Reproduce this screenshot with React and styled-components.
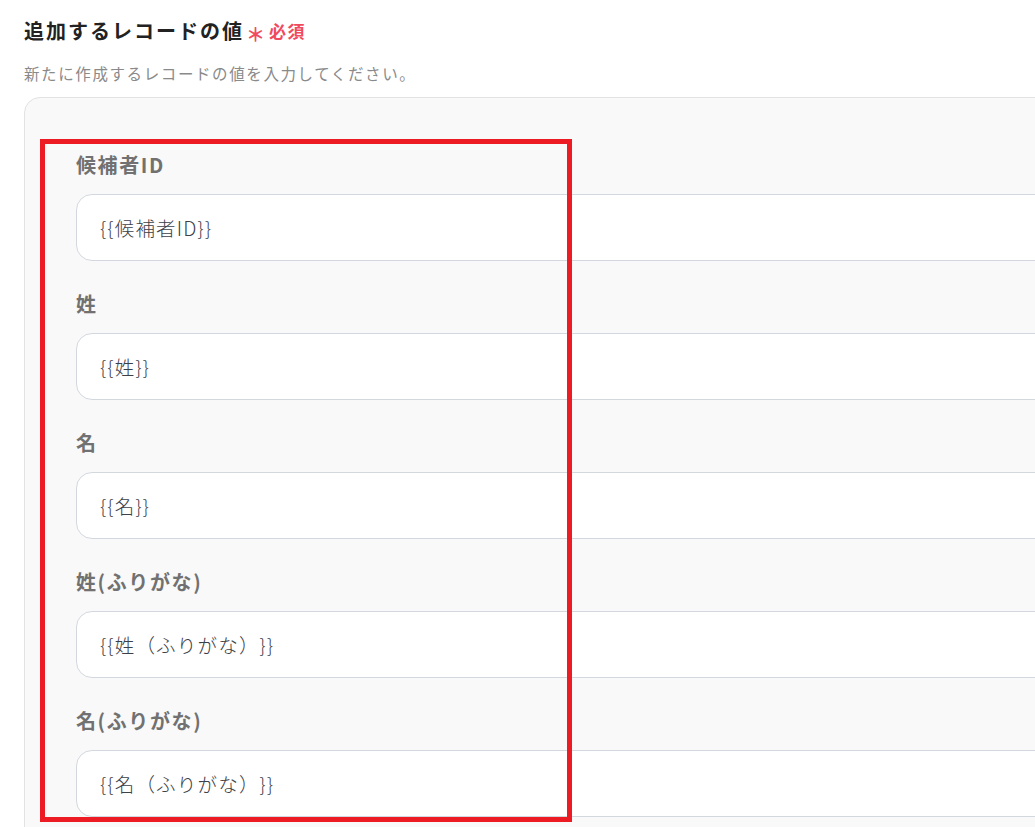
import React from 'react';
import styled, {createGlobalStyle} from 'styled-components';

const GlobalStyle = createGlobalStyle`
  html, body {
    margin: 0;
    padding: 0;
    background-color: #ffffff;
    overflow: hidden;
  }
  body {
    font-family: "Noto Sans CJK JP", "Noto Sans", sans-serif;
  }
`;

const Page = styled.div`
  padding: 16px 0 0 24px;
  width: 1100px;
`;

const Heading = styled.h2`
  margin: 0;
  display: flex;
  align-items: center;
  font-size: 20px;
  line-height: 30px;
  font-weight: 700;
  letter-spacing: 2px;
  color: #222222;
`;

const Asterisk = styled.span`
  margin-left: 2px;
  font-size: 19px;
  font-weight: 700;
  color: #f04a5e;
  line-height: 30px;
  transform: translateY(3px);
  letter-spacing: 0;
`;

const Required = styled.span`
  margin-left: 4px;
  font-size: 17px;
  font-weight: 700;
  letter-spacing: 1.5px;
  color: #f04a5e;
`;

const Description = styled.p`
  margin: 15px 0 0 0;
  font-size: 15.5px;
  line-height: 24px;
  letter-spacing: 1.6px;
  color: #8a8a8a;
`;

const Panel = styled.div`
  position: relative;
  margin-top: 12px;
  background-color: #f9f9f9;
  border: 1px solid #e2e2e2;
  border-radius: 16px;
  padding: 54px 0 40px 51px;
  display: flex;
  flex-direction: column;
  gap: 30px;
`;

const Highlight = styled.div`
  position: absolute;
  left: 15px;
  top: 41px;
  width: 532px;
  height: 683px;
  box-sizing: border-box;
  border: 5px solid #ed1c24;
  pointer-events: none;
`;

const Field = styled.div`
  display: flex;
  flex-direction: column;
  gap: 16px;
`;

const Label = styled.label`
  font-size: 20px;
  line-height: 26px;
  font-weight: 700;
  letter-spacing: 1.6px;
  color: #717171;
`;

const Input = styled.input`
  box-sizing: border-box;
  height: 67px;
  width: 100%;
  padding: 0 23px;
  background-color: #ffffff;
  border: 1px solid #d3d8df;
  border-radius: 16px;
  font-family: "Noto Sans CJK JP", "Noto Sans", sans-serif;
  font-size: 19.5px;
  font-weight: 300;
  letter-spacing: 1.2px;
  text-spacing-trim: space-all;
  color: #3c4148;
  outline: none;
`;

const fields = [
  {label: '候補者ID', value: '{{候補者ID}}'},
  {label: '姓', value: '{{姓}}'},
  {label: '名', value: '{{名}}'},
  {label: '姓(ふりがな)', value: '{{姓（ふりがな）}}'},
  {label: '名(ふりがな)', value: '{{名（ふりがな）}}'},
];

export default function App(){
  return (
    <>
      <GlobalStyle />
      <Page>
        <Heading>
          追加するレコードの値
          <Asterisk>＊</Asterisk>
          <Required>必須</Required>
        </Heading>
        <Description>新たに作成するレコードの値を入力してください。</Description>
        <Panel>
          {
            fields.map(field =>{
              return (
                <Field key={field.label}>
                  <Label>{field.label}</Label>
                  <Input readOnly value={field.value} />
                </Field>
              );
            })
          }
          <Highlight />
        </Panel>
      </Page>
    </>
  );
}
